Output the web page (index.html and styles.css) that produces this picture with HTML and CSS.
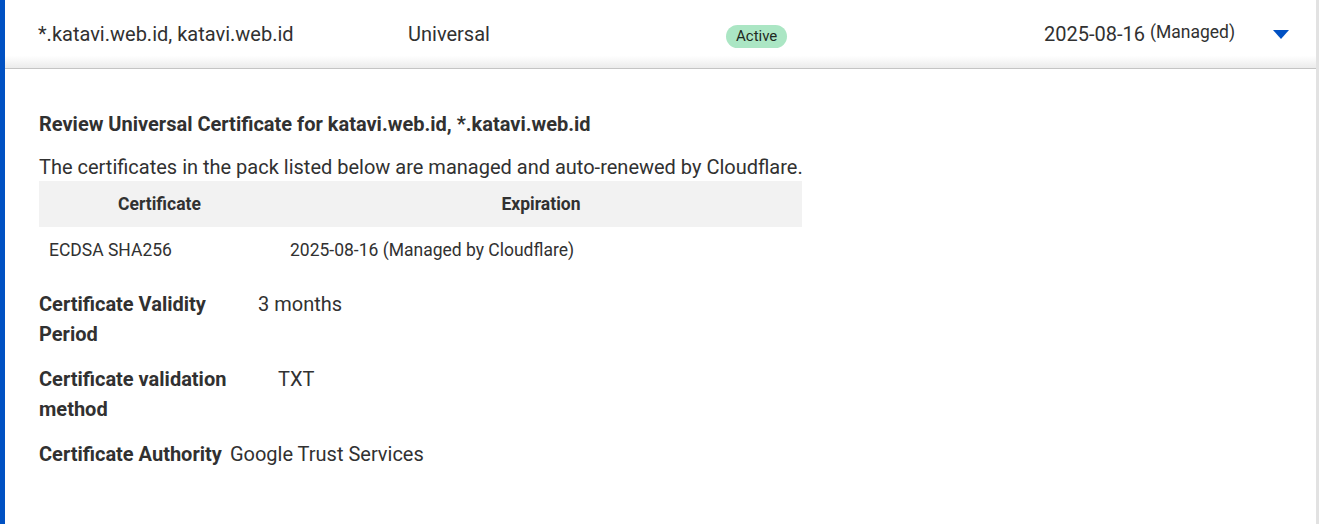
FILE: index.html
```html
<!DOCTYPE html>
<html lang="en">
<head>
    <meta charset="UTF-8">
    <meta name="viewport" content="width=device-width, initial-scale=1.0">
    <title>Edge Certificates</title>
    <link rel="stylesheet" href="styles.css">
</head>
<body>
    <div class="cert-panel">
        <div class="cert-row">
            <div class="col col-hosts">*.katavi.web.id, katavi.web.id</div>
            <div class="col col-type">Universal</div>
            <div class="col col-status"><span class="badge">Active</span></div>
            <div class="col col-expires">2025-08-16 <span class="managed">(Managed)</span></div>
            <button class="caret" aria-label="Collapse">
                <svg width="16" height="9" viewBox="0 0 16 9"><path d="M0 0h16L8 9z" fill="#0051c3"/></svg>
            </button>
        </div>

        <div class="cert-details">
            <h3>Review Universal Certificate for katavi.web.id, *.katavi.web.id</h3>
            <p class="intro">The certificates in the pack listed below are managed and auto-renewed by Cloudflare.</p>
            <table class="pack-table">
                <thead>
                    <tr>
                        <th class="th-cert">Certificate</th>
                        <th>Expiration</th>
                    </tr>
                </thead>
                <tbody>
                    <tr>
                        <td>ECDSA SHA256</td>
                        <td>2025-08-16 (Managed by Cloudflare)</td>
                    </tr>
                </tbody>
            </table>

            <div class="detail-row">
                <div class="detail-label label-validity">Certificate Validity Period</div>
                <div class="detail-value">3 months</div>
            </div>
            <div class="detail-row">
                <div class="detail-label label-method">Certificate validation method</div>
                <div class="detail-value">TXT</div>
            </div>
            <div class="detail-row">
                <div class="detail-label">Certificate Authority</div>
                <div class="detail-value">Google Trust Services</div>
            </div>
        </div>
    </div>
</body>
</html>
```

FILE: styles.css
```css
body {
    margin: 0;
    padding: 0;
    background-color: #fff;
    font-family: Roboto, 'Noto Sans', sans-serif;
    color: #313131;
}
.cert-panel {
    border-left: 5px solid #0051c3;
    border-right: 3px solid #e2e2e2;
    min-height: 524px;
    box-sizing: border-box;
}
.cert-row {
    display: flex;
    align-items: center;
    height: 69px;
    padding-left: 33px;
    padding-right: 27px;
    background: linear-gradient(to bottom, #fff 82%, #ebebeb 100%);
    border-bottom: 1px solid #c4c4c4;
    box-sizing: border-box;
    font-size: 20px;
}
.col-hosts {
    width: 370px;
}
.col-type {
    width: 318px;
}
.col-status {
    width: 318px;
}
.col-expires {
    flex: 1;
}
.badge {
    display: inline-block;
    background-color: #abe6c4;
    color: #1f2a22;
    font-size: 15px;
    padding: 3px 10px;
    border-radius: 12px;
    line-height: 17px;
    position: relative;
    top: 1px;
}
.managed {
    font-size: 17.5px;
    position: relative;
    top: -3px;
}
.caret {
    border: none;
    background: none;
    padding: 0;
    cursor: pointer;
    display: flex;
    margin-top: 1px;
}
.cert-details {
    padding: 43px 34px 40px;
}
.cert-details h3 {
    margin: 0 0 19px;
    font-size: 20px;
    line-height: 24px;
    font-weight: 700;
    color: #313131;
}
.intro {
    margin: 0 0 2px;
    font-size: 20px;
    line-height: 24px;
}
.pack-table {
    border-collapse: collapse;
    width: 763px;
    font-size: 17.5px;
    margin-bottom: 16px;
}
.pack-table th {
    background-color: #f2f2f2;
    height: 46px;
    padding: 0;
    font-weight: 700;
    text-align: center;
    color: #313131;
}
.pack-table .th-cert {
    width: 241px;
}
.pack-table td {
    height: 46px;
    padding: 0 10px;
}
.detail-row {
    display: flex;
    gap: 8px;
    font-size: 20px;
    line-height: 30px;
    margin-bottom: 15px;
}
.detail-label {
    font-weight: 700;
}
.label-validity {
    width: 211px;
}
.label-method {
    width: 231px;
}
```
